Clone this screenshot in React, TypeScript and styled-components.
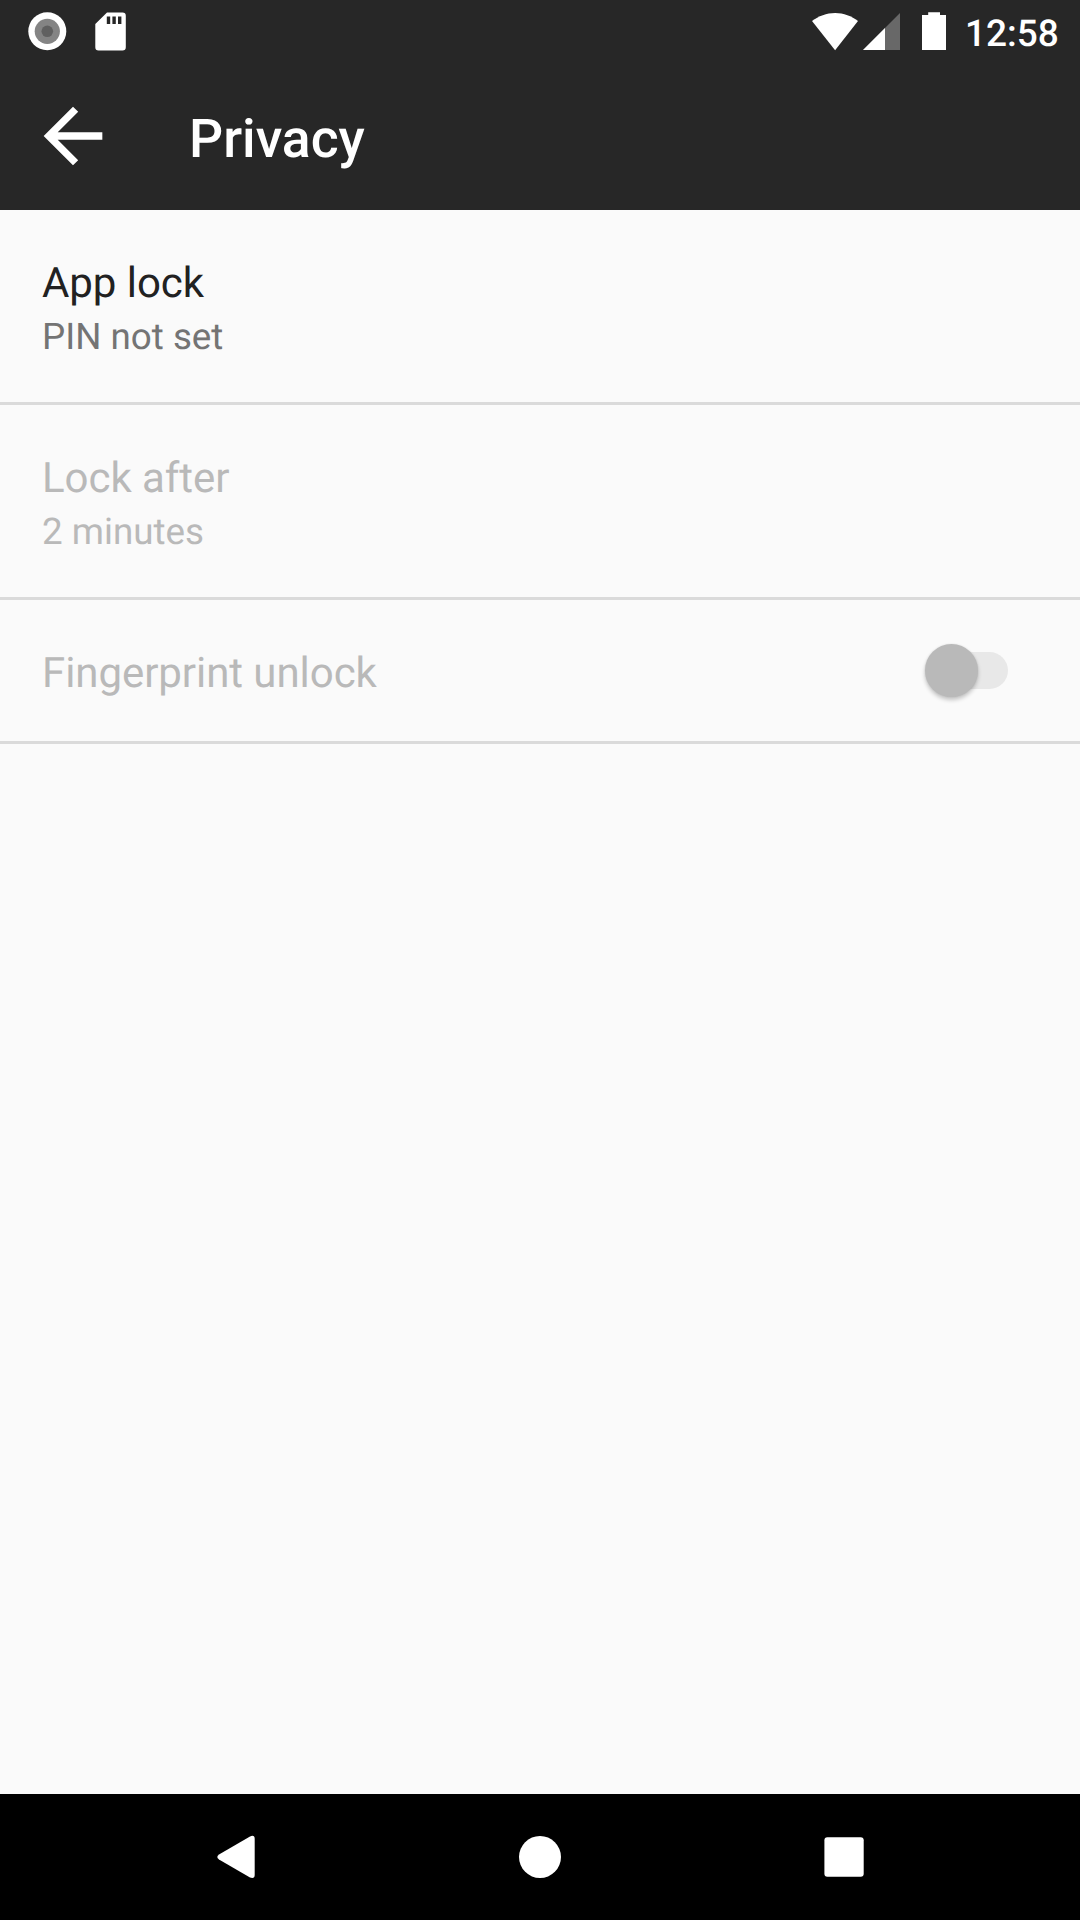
import React from 'react';
import styled, { createGlobalStyle } from 'styled-components';

const GlobalStyle = createGlobalStyle`
  * { box-sizing: border-box; }
  html, body { margin: 0; padding: 0; }
  body {
    background: #fafafa;
    font-family: Roboto, "Noto Sans", sans-serif;
    text-rendering: geometricPrecision;
  }
`;

const Screen = styled.div`
  display: flex;
  flex-direction: column;
  width: 1080px;
  height: 1920px;
  background: #fafafa;
  overflow: hidden;
`;

const StatusBar = styled.div`
  display: flex;
  justify-content: space-between;
  flex: none;
  height: 72px;
  padding: 0 21px 0 28px;
  background: #272727;
  color: #fff;
`;

const StatusGroup = styled.div`
  display: flex;
  align-items: flex-start;
  padding-top: 12px;
`;

const Glyph = styled.svg<{ $gap?: number }>`
  display: block;
  flex: none;
  margin-right: ${(p) => p.$gap ?? 0}px;
`;

const Clock = styled.span`
  width: 94px;
  height: 44px;
  margin-top: 1px;
  font-size: 37px;
  font-weight: 500;
  line-height: 44px;
  white-space: nowrap;
`;

const AppBar = styled.header`
  display: flex;
  align-items: flex-start;
  flex: none;
  height: 138px;
  padding: 20px 29px 0;
  background: #272727;
  color: #fff;
`;

const BackButton = styled.button`
  display: block;
  width: 88px;
  height: 88px;
  padding: 0;
  border: 0;
  background: none;
  color: inherit;
`;

const Title = styled.h1`
  margin: 16px 0 0 72px;
  font-size: 53.5px;
  font-weight: 500;
  line-height: 64px;
`;

const List = styled.main`
  display: flex;
  flex-direction: column;
  flex: 1;
`;

const Row = styled.div<{ $height: number; $disabled?: boolean }>`
  display: flex;
  justify-content: space-between;
  align-items: flex-start;
  height: ${(p) => p.$height}px;
  padding: 0 72px 0 42px;
  border-bottom: 3px solid #dadada;
  color: ${(p) => (p.$disabled ? '#b9b9b9' : '#212121')};
`;

const RowText = styled.div`
  display: flex;
  flex-direction: column;
  gap: 7px;
  padding-top: 50px;
`;

const RowTitle = styled.span`
  font-size: 42px;
  line-height: 48px;
  letter-spacing: -0.06px;
`;

const RowSummary = styled.span<{ $disabled?: boolean }>`
  font-size: 36.75px;
  line-height: 44px;
  color: ${(p) => (p.$disabled ? '#b9b9b9' : '#747474')};
`;

const Track = styled.div`
  display: flex;
  align-items: center;
  width: 83px;
  height: 37px;
  margin-top: 52px;
  border-radius: 19px;
  background: linear-gradient(to right, transparent 20px, #e8e8e8 20px);
`;

const Thumb = styled.div`
  flex: none;
  width: 53px;
  height: 53px;
  border-radius: 50%;
  background: #b9b9b9;
  box-shadow: 0 3px 4px rgba(0, 0, 0, 0.22), 0 0 2px rgba(0, 0, 0, 0.1);
`;

const NavBar = styled.nav`
  display: flex;
  align-items: center;
  flex: none;
  height: 126px;
  padding: 0 216px;
  justify-content: space-between;
  background: #000;
`;

type Setting = { title: string; summary?: string; height: number; disabled?: boolean; toggle?: boolean };

const settings: Setting[] = [
  { title: 'App lock', summary: 'PIN not set', height: 195 },
  { title: 'Lock after', summary: '2 minutes', height: 195, disabled: true },
  { title: 'Fingerprint unlock', height: 144, disabled: true, toggle: true },
];

export default function App() {
  return (
    <Screen>
      <GlobalStyle />
      <StatusBar>
        <StatusGroup>
          <Glyph $gap={28} width="39" height="39" viewBox="0 0 39 39">
            <circle cx="19.3" cy="19.3" r="19" fill="#fff" />
            <circle cx="19.3" cy="19.3" r="12.6" fill="#848484" />
            <circle cx="19.3" cy="19.3" r="5.8" fill="#606060" />
          </Glyph>
          <Glyph width="31" height="39" viewBox="0 0 31 39">
            <path
              fill="#fff"
              fillRule="evenodd"
              d="M12 .5H27.5A3.3 3.3 0 0 1 30.8 3.8V35.2A3.3 3.3 0 0 1 27.5 38.5H3.6A3.3 3.3 0 0 1 .3 35.2V12ZM11.8 4.4V12H15.2V4.4ZM17.4 4.4V12H20.8V4.4ZM23 4.4V12H26.4V4.4Z"
            />
          </Glyph>
        </StatusGroup>
        <StatusGroup>
          <Glyph $gap={4} width="47" height="39" viewBox="0 0 47 39">
            <path fill="#fff" d="M0 9C6.6 4.1 14.5 1 23.1 1S39.6 4.1 46 9L23.1 38.2Z" />
          </Glyph>
          <Glyph $gap={21} width="38" height="39" viewBox="0 0 38 39">
            <path fill="#686868" d="M0 38L37 1V38Z" />
            <path fill="#fff" d="M0 38L22 16V38Z" />
          </Glyph>
          <Glyph $gap={18} width="25" height="39" viewBox="0 0 25 39">
            <path fill="#fff" d="M6.2 .2H18V3H24V38H0V3H6.2Z" />
          </Glyph>
          <Clock>12:58</Clock>
        </StatusGroup>
      </StatusBar>
      <AppBar>
        <BackButton aria-label="Back">
          <Glyph width="88" height="88" viewBox="0 0 24 24" fill="currentColor">
            <path d="M20 11H7.83l5.59-5.59L12 4l-8 8 8 8 1.41-1.41L7.83 13H20z" />
          </Glyph>
        </BackButton>
        <Title>Privacy</Title>
      </AppBar>
      <List>
        {settings.map((s) => (
          <Row key={s.title} $height={s.height} $disabled={s.disabled}>
            <RowText>
              <RowTitle>{s.title}</RowTitle>
              {s.summary && <RowSummary $disabled={s.disabled}>{s.summary}</RowSummary>}
            </RowText>
            {s.toggle && (
              <Track role="switch" aria-checked={false} aria-label={s.title}>
                <Thumb />
              </Track>
            )}
          </Row>
        ))}
      </List>
      <NavBar>
        <Glyph width="40" height="44" viewBox="0 0 40 44">
          <path fill="#fff" d="M34 1.4Q38.7-.7 38.7 4V40Q38.7 44.2 34 42.6L3 24.4Q-.4 22 3 19.6Z" />
        </Glyph>
        <Glyph width="44" height="44" viewBox="0 0 44 44">
          <circle cx="22" cy="22" r="21" fill="#fff" />
        </Glyph>
        <Glyph width="40" height="40" viewBox="0 0 40 40">
          <rect x=".4" y=".3" width="39.3" height="39.4" rx="3" fill="#fff" />
        </Glyph>
      </NavBar>
    </Screen>
  );
}
